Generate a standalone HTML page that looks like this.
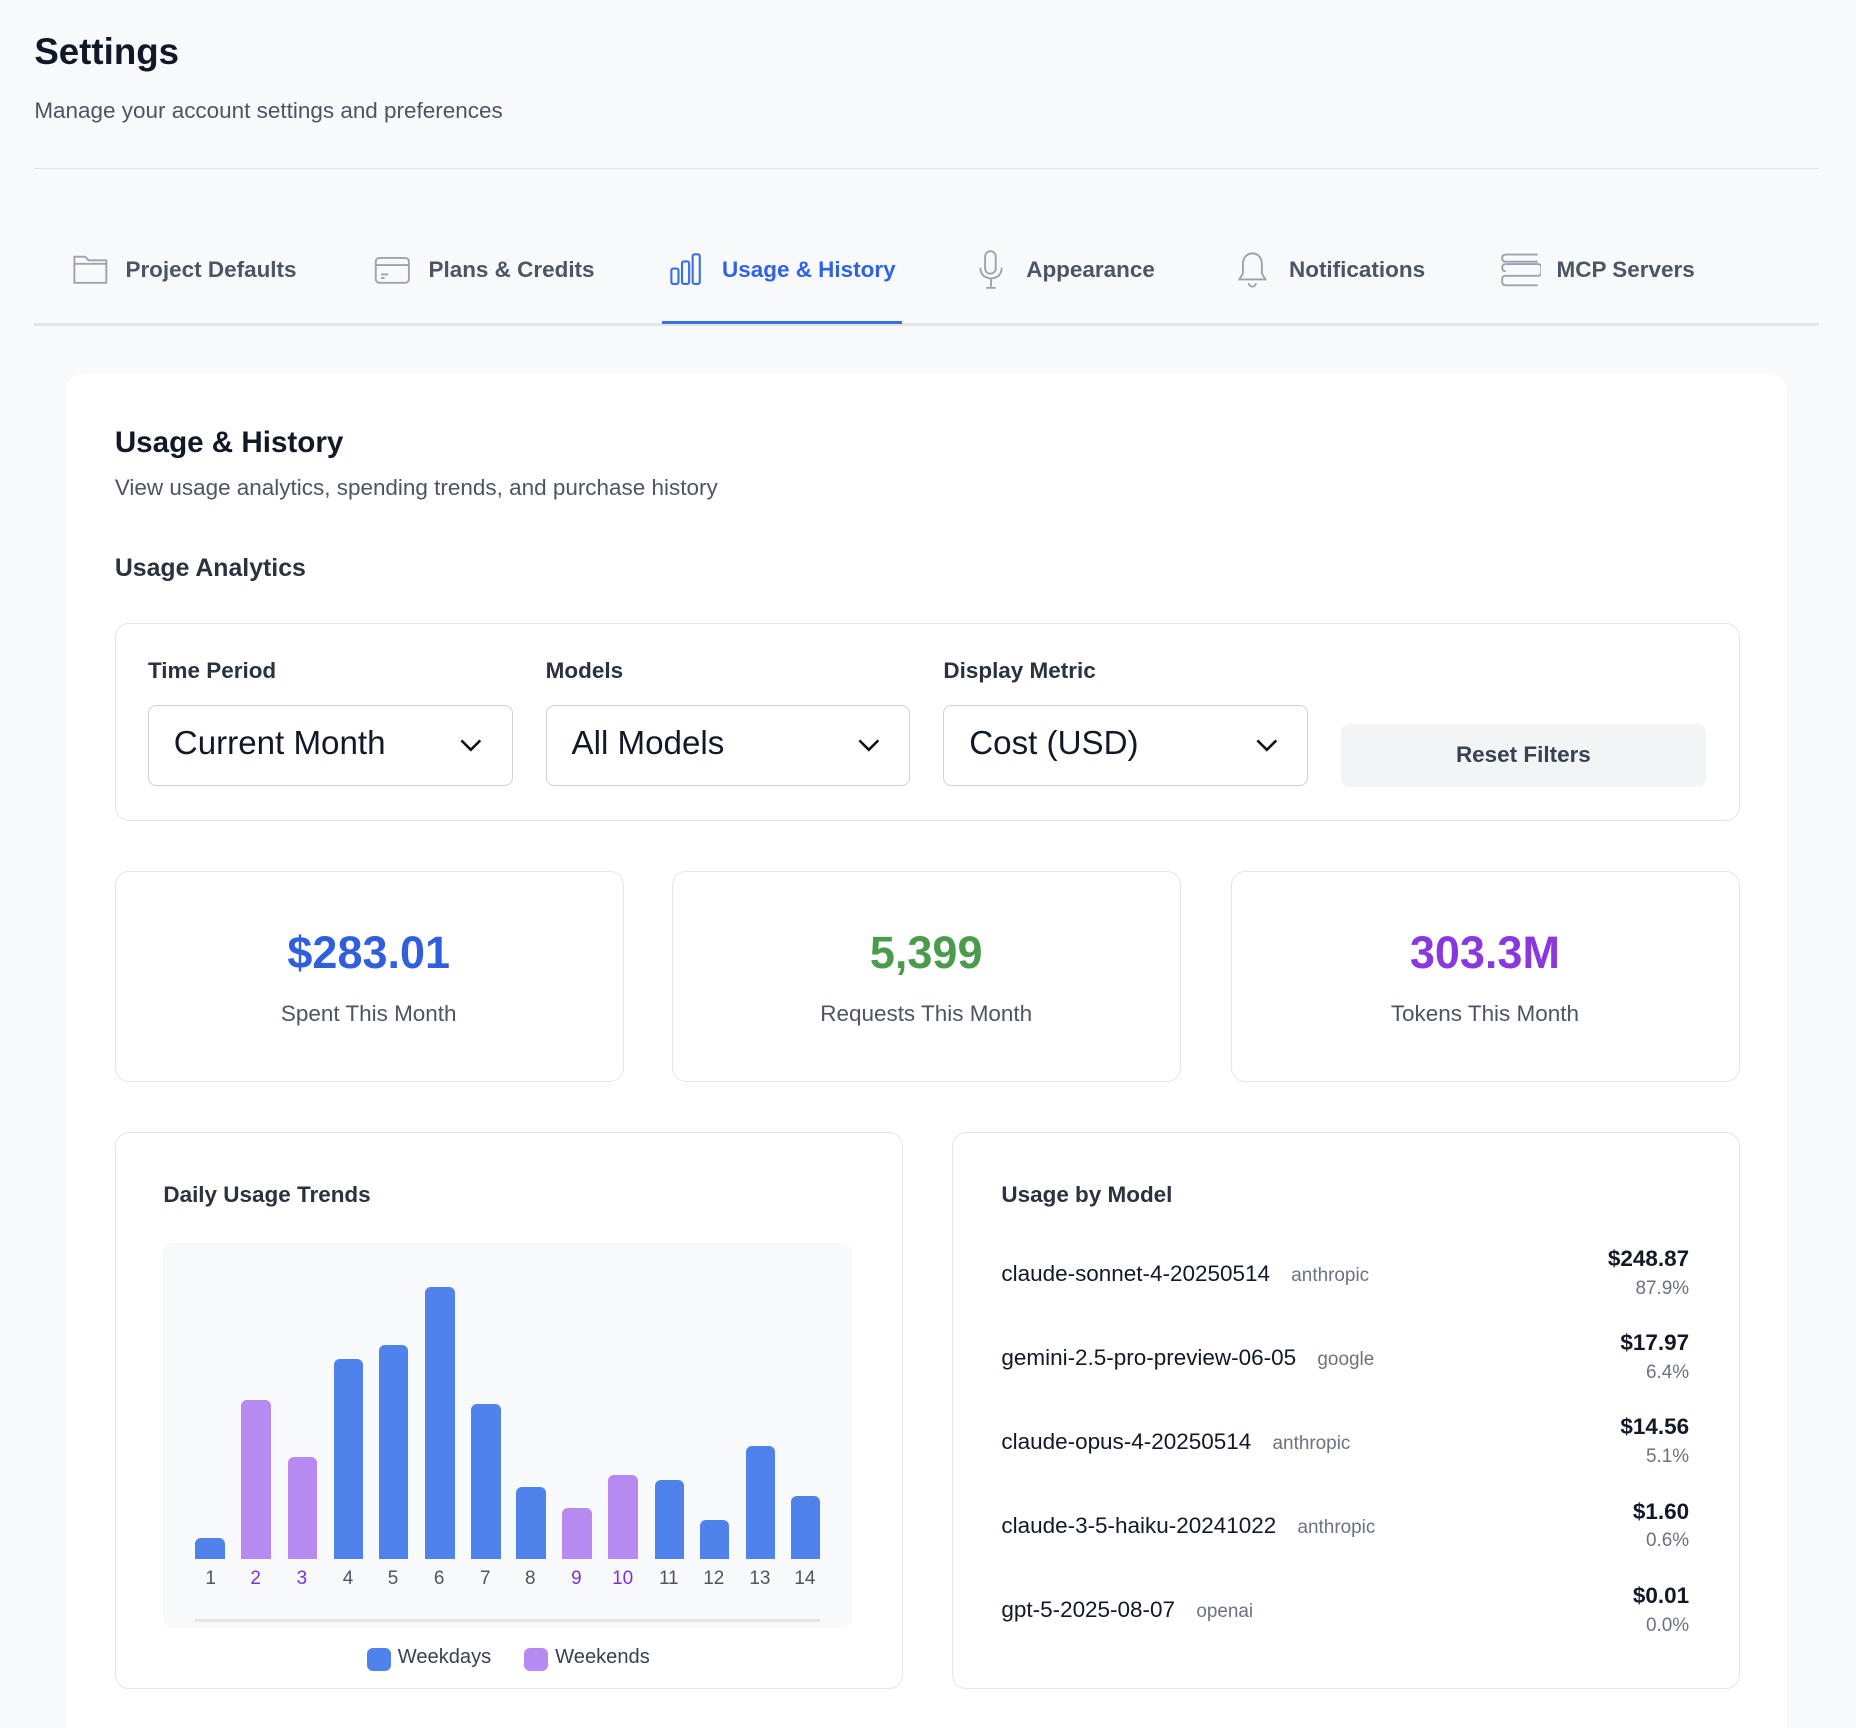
<!DOCTYPE html>
<html><head><meta charset="utf-8"><style>
html,body{margin:0;padding:0;background:#f8f9fb;overflow:hidden;}
body{width:1856px;height:1728px;overflow:hidden;}
#z{zoom:1.18367;width:1568px;height:1460px;position:relative;overflow:hidden;font-family:"Liberation Sans",sans-serif;color:#111827;}
.a{position:absolute;white-space:nowrap;}
.tab{position:absolute;top:214px;font-size:19px;font-weight:bold;color:#4b5563;height:28px;line-height:28px;white-space:nowrap;}
.tab svg{position:absolute;left:0;top:-1px;}
.box{position:absolute;border:1.5px solid #e3e5e9;border-radius:12px;background:#fff;box-sizing:border-box;}
.sel{position:absolute;top:596px;width:308px;height:68px;border:1.5px solid #cfd3d9;border-radius:7px;box-sizing:border-box;font-size:28px;line-height:65px;padding-left:21px;background:#fff;}
.sel svg{position:absolute;right:24px;top:27px;}
.lbl{position:absolute;top:556px;font-size:19px;font-weight:bold;color:#2a3240;}
.val{position:absolute;width:429px;text-align:center;top:783px;font-size:38px;font-weight:bold;}
.sl{position:absolute;width:429px;text-align:center;top:846px;font-size:19px;color:#4b5563;}
.bar{position:absolute;width:25px;border-radius:5px 5px 0 0;bottom:143px;}
.b{background:#4f83eb}.p{background:#b78af2}
.n{position:absolute;top:1325px;width:30px;text-align:center;font-size:16px;color:#4b5563;}
.n.w{color:#7e2fe0}
.mn{position:absolute;left:846px;font-size:19px;color:#111827;}
.mn span{font-size:16px;color:#6b7280;margin-left:18px;}
.mv{position:absolute;right:141px;text-align:right;font-size:19px;font-weight:bold;}
.mp{position:absolute;right:141px;text-align:right;font-size:16px;color:#6b7280;}
</style></head><body><div id="z">
<div class="a" style="left:29px;top:26px;font-size:31px;font-weight:bold;">Settings</div>
<div class="a" style="left:29px;top:83px;font-size:19px;color:#4b5563;">Manage your account settings and preferences</div>
<div class="a" style="left:29px;top:142px;width:1508px;height:1px;background:#e1e3e7;"></div>

<div class="tab" style="left:61px;padding-left:45px;"><svg width="31" height="30" viewBox="0 0 31 30" fill="none" stroke="#9ca3af" stroke-width="1.6"><path d="M2 4h9l3 3h15v19H2z"/><path d="M2 10h27"/></svg>Project Defaults</div>
<div class="tab" style="left:316px;padding-left:46px;"><svg width="31" height="30" viewBox="0 0 31 30" fill="none" stroke="#9ca3af" stroke-width="1.6"><rect x="1.5" y="5" width="28" height="21" rx="3"/><path d="M1.5 11h28M6 19h6M6 22h3"/></svg>Plans &amp; Credits</div>
<div class="tab" style="left:565px;padding-left:45px;color:#2f63e0;"><svg width="30" height="30" viewBox="0 0 30 30" fill="none" stroke="#3b6fe8" stroke-width="1.8"><rect x="2" y="14" width="6" height="13" rx="1.5"/><rect x="11" y="8" width="6" height="19" rx="1.5"/><rect x="20" y="2" width="6" height="25" rx="1.5"/></svg>Usage &amp; History</div>
<div class="tab" style="left:826px;padding-left:41px;"><svg width="22" height="34" viewBox="0 0 22 34" fill="none" stroke="#9ca3af" stroke-width="1.6" style="top:-3px"><rect x="6" y="1" width="9" height="19" rx="4.5"/><path d="M2 15c0 6 4 9 9 9s9-3 9-9M11 24v7M7 32h8"/></svg>Appearance</div>
<div class="tab" style="left:1045px;padding-left:44px;"><svg width="26" height="32" viewBox="0 0 26 32" fill="none" stroke="#9ca3af" stroke-width="1.6" style="top:-2px"><path d="M13 2c-5 0-8 4-8 9v8l-3 5h22l-3-5v-8c0-5-3-9-8-9z"/><path d="M10 27c0 2 1.5 3 3 3s3-1 3-3"/></svg>Notifications</div>
<div class="tab" style="left:1268px;padding-left:47px;"><svg width="34" height="32" viewBox="0 0 34 32" fill="none" stroke="#9ca3af" stroke-width="1.6" style="top:-2px"><path d="M4 3h27M4 3c-2 0-3 1-3 3s1 3 3 3h27M4 11h27c2 0 3 1 3 3v4c0 2-1 3-3 3H4c-2 0-3 1-3 3v2c0 2 1 3 3 3h27"/><path d="M4 11c-2 0-3 1-3 3s1 3 3 3"/></svg>MCP Servers</div>
<div class="a" style="left:29px;top:273px;width:1508px;height:2px;background:#e3e5e8;"></div>
<div class="a" style="left:559px;top:271px;width:203px;height:3px;background:#3b6fe8;"></div>

<div class="a" style="left:56px;top:316px;width:1454px;height:1160px;background:#fff;border-radius:14px;"></div>
<div class="a" style="left:97px;top:360px;font-size:25px;font-weight:bold;color:#111827;">Usage &amp; History</div>
<div class="a" style="left:97px;top:401px;font-size:19px;color:#4b5563;">View usage analytics, spending trends, and purchase history</div>
<div class="a" style="left:97px;top:469px;font-size:21px;font-weight:bold;color:#2a3240;">Usage Analytics</div>

<div class="box" style="left:97px;top:526px;width:1373px;height:168px;"></div>
<div class="lbl" style="left:125px;">Time Period</div>
<div class="lbl" style="left:461px;">Models</div>
<div class="lbl" style="left:797px;">Display Metric</div>
<div class="sel" style="left:125px;">Current Month<svg width="20" height="12" viewBox="0 0 20 12" fill="none" stroke="#111" stroke-width="2.2"><path d="M2 2l8 8 8-8"/></svg></div>
<div class="sel" style="left:461px;">All Models<svg width="20" height="12" viewBox="0 0 20 12" fill="none" stroke="#111" stroke-width="2.2"><path d="M2 2l8 8 8-8"/></svg></div>
<div class="sel" style="left:797px;">Cost (USD)<svg width="20" height="12" viewBox="0 0 20 12" fill="none" stroke="#111" stroke-width="2.2"><path d="M2 2l8 8 8-8"/></svg></div>
<div class="a" style="left:1133px;top:612px;width:308px;height:53px;background:#f3f4f6;border-radius:7px;text-align:center;line-height:53px;font-size:19px;font-weight:bold;color:#374151;">Reset Filters</div>

<div class="box" style="left:97px;top:736px;width:430px;height:178px;"></div>
<div class="box" style="left:568px;top:736px;width:430px;height:178px;"></div>
<div class="box" style="left:1040px;top:736px;width:430px;height:178px;"></div>
<div class="val" style="left:97px;color:#2f5fdd;">$283.01</div>
<div class="val" style="left:568px;color:#4a9b4c;">5,399</div>
<div class="val" style="left:1040px;color:#8a37e0;">303.3M</div>
<div class="sl" style="left:97px;">Spent This Month</div>
<div class="sl" style="left:568px;">Requests This Month</div>
<div class="sl" style="left:1040px;">Tokens This Month</div>

<div class="box" style="left:97px;top:956px;width:666px;height:471px;"></div>
<div class="a" style="left:138px;top:999px;font-size:19px;font-weight:bold;color:#2a3240;">Daily Usage Trends</div>
<div class="a" style="left:138px;top:1050px;width:582px;height:325px;background:#f8f9fb;border-radius:8px;"></div>
<div class="bar b" style="left:165px;height:18px"></div>
<div class="bar p" style="left:204px;height:134px"></div>
<div class="bar p" style="left:243px;height:86px"></div>
<div class="bar b" style="left:282px;height:169px"></div>
<div class="bar b" style="left:320px;height:181px"></div>
<div class="bar b" style="left:359px;height:230px"></div>
<div class="bar b" style="left:398px;height:131px"></div>
<div class="bar b" style="left:436px;height:61px"></div>
<div class="bar p" style="left:475px;height:43px"></div>
<div class="bar p" style="left:514px;height:71px"></div>
<div class="bar b" style="left:553px;height:67px"></div>
<div class="bar b" style="left:591px;height:33px"></div>
<div class="bar b" style="left:630px;height:95px"></div>
<div class="bar b" style="left:668px;height:53px"></div>
<div class="n" style="left:163px">1</div><div class="n w" style="left:201px">2</div><div class="n w" style="left:240px">3</div><div class="n" style="left:279px">4</div><div class="n" style="left:317px">5</div><div class="n" style="left:356px">6</div><div class="n" style="left:395px">7</div><div class="n" style="left:433px">8</div><div class="n w" style="left:472px">9</div><div class="n w" style="left:511px">10</div><div class="n" style="left:550px">11</div><div class="n" style="left:588px">12</div><div class="n" style="left:627px">13</div><div class="n" style="left:665px">14</div>
<div class="a" style="left:165px;top:1368px;width:528px;height:2px;background:#e3e5e8;"></div>
<div class="a" style="left:310px;top:1392px;width:20px;height:20px;border-radius:5px;background:#4f83eb;"></div>
<div class="a" style="left:336px;top:1391px;font-size:17px;color:#374151;">Weekdays</div>
<div class="a" style="left:443px;top:1392px;width:20px;height:20px;border-radius:5px;background:#b78af2;"></div>
<div class="a" style="left:469px;top:1391px;font-size:17px;color:#374151;">Weekends</div>

<div class="box" style="left:804px;top:956px;width:666px;height:471px;"></div>
<div class="a" style="left:846px;top:999px;font-size:19px;font-weight:bold;color:#2a3240;">Usage by Model</div>

<div class="mn" style="top:1065px">claude-sonnet-4-20250514<span>anthropic</span></div>
<div class="mv" style="top:1053px">$248.87</div><div class="mp" style="top:1080px">87.9%</div>
<div class="mn" style="top:1136px">gemini-2.5-pro-preview-06-05<span>google</span></div>
<div class="mv" style="top:1124px">$17.97</div><div class="mp" style="top:1151px">6.4%</div>
<div class="mn" style="top:1207px">claude-opus-4-20250514<span>anthropic</span></div>
<div class="mv" style="top:1195px">$14.56</div><div class="mp" style="top:1222px">5.1%</div>
<div class="mn" style="top:1278px">claude-3-5-haiku-20241022<span>anthropic</span></div>
<div class="mv" style="top:1266px">$1.60</div><div class="mp" style="top:1293px">0.6%</div>
<div class="mn" style="top:1349px">gpt-5-2025-08-07<span>openai</span></div>
<div class="mv" style="top:1337px">$0.01</div><div class="mp" style="top:1364px">0.0%</div>
</div></body></html>
